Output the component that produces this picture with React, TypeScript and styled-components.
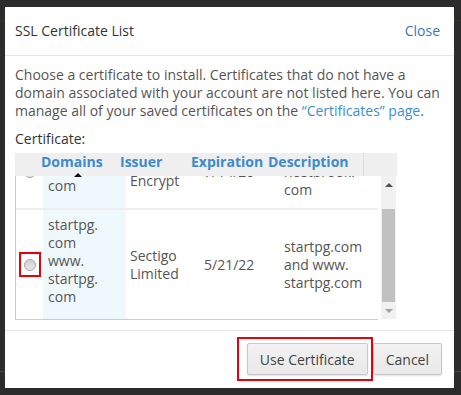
import React, { useLayoutEffect, useRef } from "react";
import styled, { createGlobalStyle } from "styled-components";

const GlobalStyle = createGlobalStyle`
  html, body {
    margin: 0;
    padding: 0;
  }
  body {
    width: 461px;
    height: 395px;
    overflow: hidden;
    font-family: "Open Sans", "DejaVu Sans", sans-serif;
    background: linear-gradient(
      to bottom,
      #2c2c2c 0px,
      #2c2c2c 20px,
      #3b3527 20px,
      #3b3527 21px,
      #2c2c2c 21px,
      #2c2c2c 371px,
      #4a4a4a 371px,
      #4a4a4a 372px,
      #2c2c2c 372px
    );
  }
`;

const Page = styled.div`
  padding: 7px 0 0 5px;
`;

const Dialog = styled.div`
  width: 449px;
  height: 381px;
  background: #ffffff;
  display: flex;
  flex-direction: column;
  box-sizing: border-box;
`;

const Header = styled.div`
  height: 49px;
  box-sizing: border-box;
  border-bottom: 1px solid #e5e5e5;
  display: flex;
  align-items: center;
  justify-content: space-between;
  padding: 0 14px 1px 10px;
`;

const Title = styled.div`
  font-size: 14px;
  color: #333333;
`;

const CloseLink = styled.a`
  font-size: 14px;
  color: #3a78b5;
  text-decoration: none;
  cursor: pointer;
`;

const Body = styled.div`
  padding: 10px 10px 10px 10px;
  flex: 1;
`;

const Intro = styled.p`
  margin: 0;
  font-size: 14px;
  line-height: 18px;
  color: #555555;
`;

const Link = styled.a`
  color: #3d8fd1;
  text-decoration: none;
`;

const FieldLabel = styled.div`
  margin: 10px 0 5px;
  font-size: 14px;
  line-height: 18px;
  color: #333333;
`;

const TableFrame = styled.div`
  width: 382px;
  display: flex;
  flex-direction: column;
`;

const HeadRow = styled.div`
  height: 23px;
  background: #efefef;
  display: flex;
`;

const HeadCell = styled.div<{ $w?: number; $divider?: boolean; $sorted?: boolean }>`
  position: relative;
  ${(p) => (p.$w ? `width: ${p.$w}px; flex: none;` : "flex: 1;")}
  box-sizing: border-box;
  font-size: 14px;
  font-weight: 700;
  line-height: 18px;
  color: #3d8bcd;
  white-space: nowrap;
  border-right: ${(p) => (p.$divider ? "1px solid #dcdcdc" : "none")};
  ${(p) =>
    p.$sorted
      ? `&::after {
          content: "";
          position: absolute;
          left: 33px;
          bottom: -1px;
          width: 0;
          height: 0;
          border-style: solid;
          border-width: 0 4px 4px 4px;
          border-color: transparent transparent #111 transparent;
          z-index: 2;
        }`
      : ""}
`;

const BodyRow = styled.div`
  display: flex;
  align-items: flex-start;
`;

const Viewport = styled.div`
  width: 362px;
  height: 143px;
  overflow: hidden;
  border-left: 1px solid #cccccc;
  border-bottom: 1px solid #cccccc;
`;

const Table = styled.table`
  width: 362px;
  table-layout: fixed;
  border-collapse: collapse;
  font-size: 14px;
  line-height: 18px;
  color: #555555;
`;

const Col = styled.col<{ $w: number }>`
  width: ${(p) => p.$w}px;
`;

const Row = styled.tr``;

const Cell = styled.td<{ $pl?: number; $highlight?: boolean; $center?: boolean; $domain?: boolean }>`
  vertical-align: middle;
  border-top: 2px solid #eeeeee;
  padding: ${(p) => (p.$domain ? "6px 0 13px" : "6px 0 6px")};
  padding-left: ${(p) => p.$pl ?? 0}px;
  background: ${(p) => (p.$highlight ? "#eff8fd" : "transparent")};
  text-align: ${(p) => (p.$center ? "center" : "left")};
  white-space: nowrap;
`;

const Line = styled.span`
  display: block;
`;

const Mark = styled.div<{ $on?: boolean }>`
  width: 22px;
  height: 25px;
  box-sizing: border-box;
  margin: 0 auto;
  border: 2px solid ${(p) => (p.$on ? "#e8000b" : "transparent")};
  display: flex;
  align-items: center;
  justify-content: center;
`;

const RadioDot = styled.span`
  width: 12px;
  height: 12px;
  box-sizing: border-box;
  border-radius: 50%;
  border: 1px solid #a8a8a8;
  background: linear-gradient(to bottom, #d2d2d2, #e6e6e6);
`;

const Scrollbar = styled.div`
  margin-left: 3px;
  width: 15px;
  height: 143px;
  background: #f1f1f1;
  display: flex;
  flex-direction: column;
`;

const ScrollButton = styled.div<{ $down?: boolean }>`
  height: 17px;
  flex: none;
  display: flex;
  align-items: center;
  justify-content: center;
  &::before {
    content: "";
    width: 0;
    height: 0;
    border-style: solid;
    border-width: ${(p) => (p.$down ? "4px 4px 0 4px" : "0 4px 4px 4px")};
    border-color: ${(p) =>
      p.$down
        ? "#a3a3a3 transparent transparent transparent"
        : "transparent transparent #505050 transparent"};
  }
`;

const Track = styled.div`
  flex: 1;
  display: flex;
  flex-direction: column;
`;

const Thumb = styled.div`
  margin: 16px 1px 0;
  height: 93px;
  background: #c1c1c1;
`;

const Footer = styled.div`
  border-top: 1px solid #e5e5e5;
  padding: 6px 12px 7px;
  display: flex;
  align-items: center;
  justify-content: flex-end;
`;

const Highlight = styled.div`
  border: 2px solid #e8000b;
  padding: 4px 3px 4px 8px;
  display: flex;
`;

const Button = styled.button`
  height: 32px;
  padding: 0 12px;
  font-family: "Open Sans", "DejaVu Sans", sans-serif;
  font-size: 14px;
  color: #444444;
  background: linear-gradient(to bottom, #f2f2f2, #e9e9e9);
  border: 1px solid #c8c8c8;
  border-radius: 2px;
  box-shadow: 0 1px 2px rgba(0, 0, 0, 0.12);
  cursor: pointer;
`;

type Cert = {
  domains: string[];
  issuer: string[];
  expires: string;
  description: string[];
  marked: boolean;
};

const certs: Cert[] = [
  {
    domains: ["www.", "hostbrook.", "com"],
    issuer: ["Let's", "Encrypt"],
    expires: "7/14/20",
    description: ["and www.", "hostbrook.", "com"],
    marked: false,
  },
  {
    domains: ["startpg.", "com", "www.", "startpg.", "com"],
    issuer: ["Sectigo", "Limited"],
    expires: "5/21/22",
    description: ["startpg.com", "and www.", "startpg.com"],
    marked: true,
  },
];

const Lines = ({ items }: { items: string[] }) => (
  <>
    {items.map((t, i) => (
      <Line key={i}>{t}</Line>
    ))}
  </>
);

export default function App() {
  const viewRef = useRef<HTMLDivElement>(null);
  useLayoutEffect(() => {
    const el = viewRef.current;
    if (el) el.scrollTop = el.scrollHeight;
  }, []);

  return (
    <Page>
      <GlobalStyle />
      <Dialog>
        <Header>
          <Title>SSL Certificate List</Title>
          <CloseLink>Close</CloseLink>
        </Header>
        <Body>
          <Intro>
            Choose a certificate to install. Certificates that do not have a domain associated with your
            account are not listed here. You can manage all of your saved certificates on the{" "}
            <Link>“Certificates” page</Link>.
          </Intro>
          <FieldLabel>Certificate:</FieldLabel>
          <TableFrame>
            <HeadRow>
              <HeadCell $w={26} />
              <HeadCell $w={79} $sorted>
                Domains
              </HeadCell>
              <HeadCell $w={71}>Issuer</HeadCell>
              <HeadCell $w={77}>Expiration</HeadCell>
              <HeadCell $w={96} $divider>
                Description
              </HeadCell>
              <HeadCell />
            </HeadRow>
            <BodyRow>
              <Viewport ref={viewRef}>
                <Table>
                  <colgroup>
                    <Col $w={27} />
                    <Col $w={83} />
                    <Col $w={64} />
                    <Col $w={86} />
                    <Col $w={102} />
                  </colgroup>
                  <tbody>
                    {certs.map((c, i) => (
                      <Row key={i}>
                        <Cell $center>
                          <Mark $on={c.marked}>
                            <RadioDot />
                          </Mark>
                        </Cell>
                        <Cell $pl={5} $highlight $domain>
                          <Lines items={c.domains} />
                        </Cell>
                        <Cell $pl={4}>
                          <Lines items={c.issuer} />
                        </Cell>
                        <Cell $pl={14}>{c.expires}</Cell>
                        <Cell $pl={8}>
                          <Lines items={c.description} />
                        </Cell>
                      </Row>
                    ))}
                  </tbody>
                </Table>
              </Viewport>
              <Scrollbar>
                <ScrollButton />
                <Track>
                  <Thumb />
                </Track>
                <ScrollButton $down />
              </Scrollbar>
            </BodyRow>
          </TableFrame>
        </Body>
        <Footer>
          <Highlight>
            <Button>Use Certificate</Button>
          </Highlight>
          <Button>Cancel</Button>
        </Footer>
      </Dialog>
    </Page>
  );
}
